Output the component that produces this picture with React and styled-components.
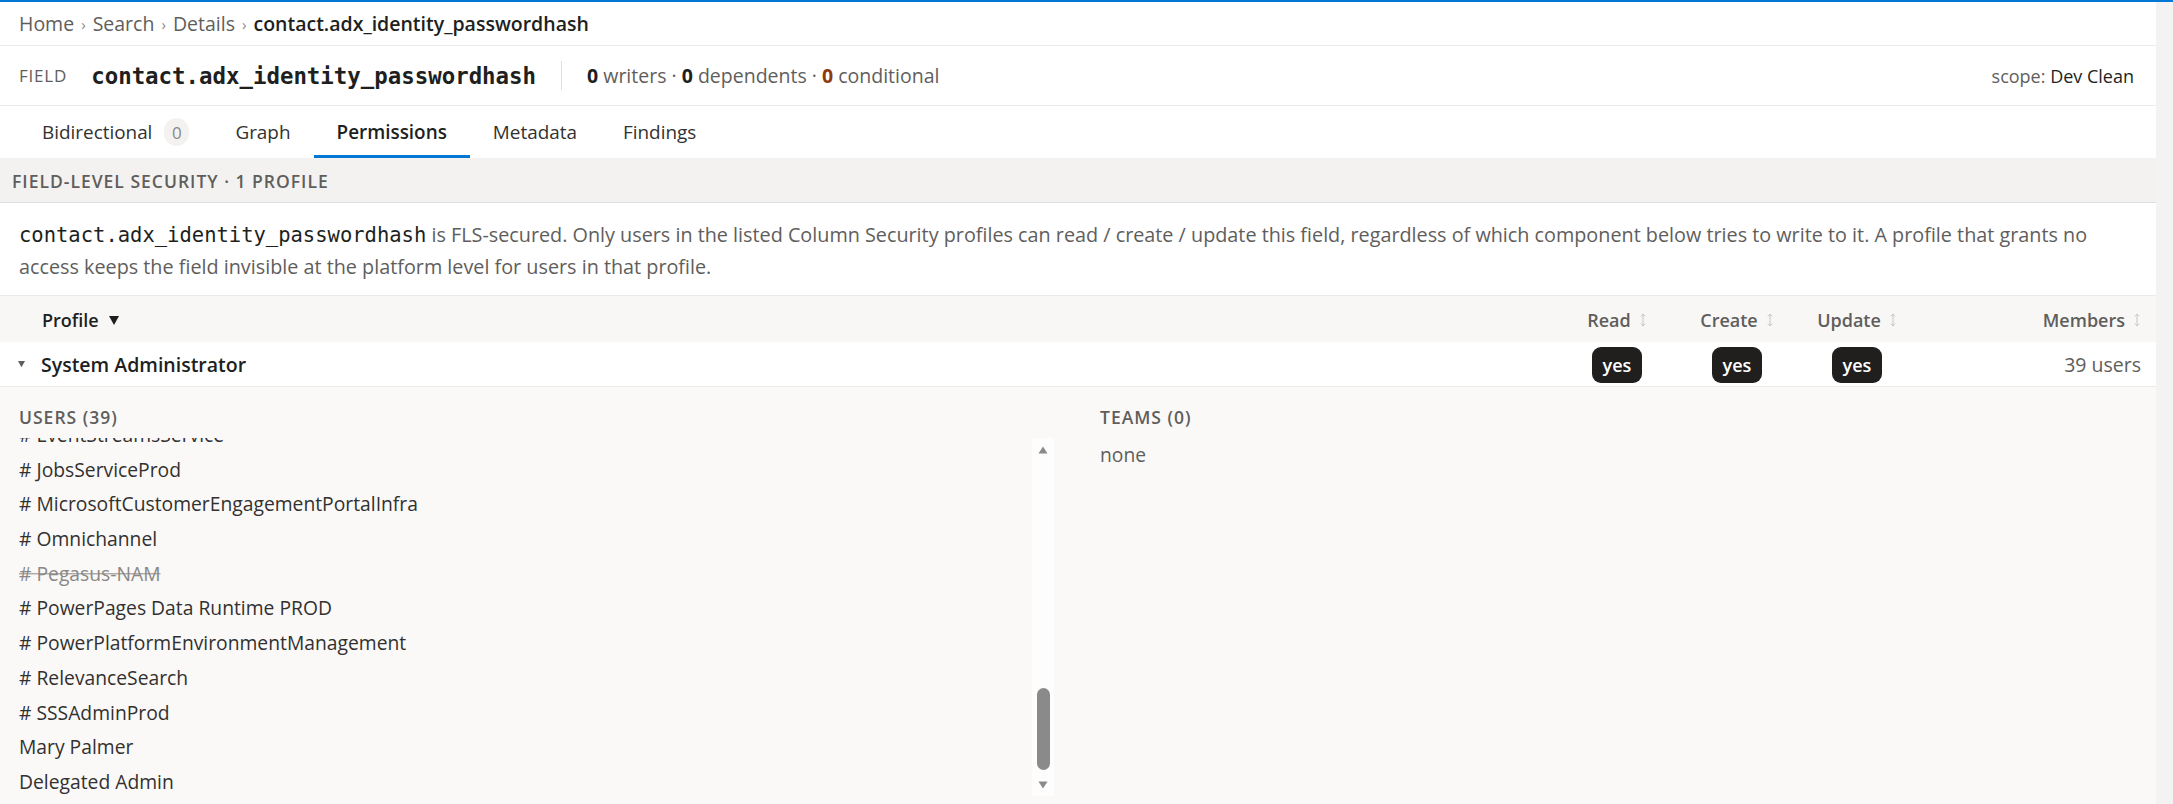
import React from "react";
import styled, { createGlobalStyle } from "styled-components";

const GlobalStyle = createGlobalStyle`
  html, body {
    margin: 0;
    padding: 0;
    background: #ffffff;
  }
  body {
    font-family: "Open Sans", "Noto Sans", sans-serif;
    color: #323130;
    overflow: hidden;
  }
  * {
    box-sizing: border-box;
  }
`;

const MONO = `"DejaVu Sans Mono", "Liberation Mono", monospace`;

const Frame = styled.div`
  display: flex;
  height: 100vh;
  border-top: 2px solid #0078d4;
`;

const Main = styled.div`
  flex: 1;
  min-width: 0;
  display: flex;
  flex-direction: column;
  overflow: hidden;
`;

const PageTrack = styled.div`
  width: 17px;
  flex-shrink: 0;
  background: #f3f3f3;
`;

/* breadcrumb bar */
const Crumbs = styled.nav`
  height: 44px;
  flex-shrink: 0;
  display: flex;
  align-items: center;
  padding: 0 19px;
  border-bottom: 1px solid #edebe9;
  font-size: 19.5px;
  color: #605e5c;
`;

const Sep = styled.span`
  margin: 0 7px;
  font-size: 15px;
  color: #8a8886;
`;

const Current = styled.span`
  color: #201f1e;
  font-weight: 600;
`;

/* field header */
const FieldBar = styled.header`
  height: 60px;
  flex-shrink: 0;
  display: flex;
  align-items: center;
  padding: 0 22px 0 19px;
  border-bottom: 1px solid #edebe9;
`;

const Kind = styled.span`
  font-size: 17px;
  letter-spacing: 0.8px;
  color: #605e5c;
  margin-right: 24px;
`;

const FieldName = styled.span`
  font-family: ${MONO};
  font-size: 22.4px;
  font-weight: bold;
  color: #201f1e;
`;

const VDivider = styled.span`
  width: 1px;
  height: 29px;
  background: #e1dfdd;
  margin: 0 25px 0 25px;
`;

const Stats = styled.span`
  font-size: 19.5px;
  color: #605e5c;
`;

const Num = styled.b`
  font-weight: 700;
  color: ${(p) => (p.$warn ? "#8e3a0e" : "#201f1e")};
`;

const Scope = styled.span`
  margin-left: auto;
  font-size: 18px;
  color: #605e5c;

  span {
    color: #201f1e;
  }
`;

/* tabs */
const TabBar = styled.div`
  height: 52px;
  flex-shrink: 0;
  display: flex;
  padding-left: 19px;
`;

const Tab = styled.div`
  display: flex;
  align-items: center;
  padding: 3px 23px 0;
  font-size: 18.9px;
  color: ${(p) => (p.$active ? "#201f1e" : "#323130")};
  font-weight: ${(p) => (p.$active ? 600 : 400)};
  border-bottom: 3px solid ${(p) => (p.$active ? "#0078d4" : "transparent")};
`;

const TabCount = styled.span`
  margin-left: 12px;
  min-width: 25px;
  height: 28px;
  border-radius: 14px;
  background: #f3f2f1;
  color: #8a8886;
  font-size: 17px;
  font-weight: 400;
  display: flex;
  align-items: center;
  justify-content: center;
`;

/* section */
const SectionHeader = styled.div`
  height: 45px;
  flex-shrink: 0;
  display: flex;
  align-items: center;
  padding: 1px 12px 0;
  background: #f3f2f1;
  border-bottom: 1px solid #e1dfdd;
  font-size: 17.5px;
  font-weight: 600;
  letter-spacing: 1px;
  text-transform: uppercase;
  color: #605e5c;
`;

const Description = styled.p`
  margin: 0;
  flex-shrink: 0;
  padding: 16px 19px 12px;
  font-size: 19.8px;
  line-height: 32px;
  color: #605e5c;
  border-bottom: 1px solid #edebe9;
`;

const Code = styled.code`
  font-family: ${MONO};
  font-size: 20.5px;
  color: #201f1e;
`;

/* permissions table */
const Row = styled.div`
  display: grid;
  grid-template-columns: 1fr 120px 120px 120px 239px;
  align-items: center;
  flex-shrink: 0;
`;

const HeadRow = styled(Row)`
  height: 46px;
  padding-top: 2px;
  background: #f8f7f6;
  font-size: 18px;
  font-weight: 600;
  color: #605e5c;
`;

const ProfileRow = styled(Row)`
  height: 45px;
  padding-top: 1px;
  background: #ffffff;
  border-bottom: 1px solid #edebe9;
`;

const Cell = styled.div`
  display: flex;
  align-items: center;
  justify-content: ${(p) =>
    p.$align === "right" ? "flex-end" : p.$align === "center" ? "center" : "flex-start"};
  padding-right: ${(p) => (p.$align === "right" ? "15px" : "0")};
`;

const ProfileHead = styled(Cell)`
  padding-left: 42px;
  color: #201f1e;
  gap: 10px;
`;

const ProfileName = styled(Cell)`
  padding-left: 18px;
  gap: 16px;
  font-size: 19.5px;
  font-weight: 600;
  color: #201f1e;
`;

const Pill = styled.span`
  width: 50px;
  height: 36px;
  border-radius: 9px;
  background: #201f1e;
  color: #ffffff;
  font-size: 18px;
  font-weight: 600;
  display: flex;
  align-items: center;
  justify-content: center;
`;

const Members = styled.span`
  font-size: 19.5px;
  color: #605e5c;
`;

const SortIcon = () => (
  <svg width="8" height="16" viewBox="0 0 8 16" style={{ marginLeft: 8 }}>
    <path d="M4 2v12M1.8 4.4 4 2l2.2 2.4M1.8 11.6 4 14l2.2-2.4" fill="none" stroke="#c8c6c4" strokeWidth="1" />
  </svg>
);

const DownTriangle = ({ size = 10, color = "#201f1e" }) => (
  <svg width={size} height={size * 0.9} viewBox="0 0 10 9">
    <path d="M0 0h10L5 9z" fill={color} />
  </svg>
);

/* expanded profile details */
const Details = styled.div`
  flex: 1;
  display: grid;
  grid-template-columns: 1fr 1fr;
  column-gap: 44px;
  padding: 19px 19px 0;
  background: #faf9f8;
`;

const Group = styled.div`
  min-width: 0;
`;

const GroupLabel = styled.div`
  font-size: 17.5px;
  font-weight: 600;
  letter-spacing: 1px;
  line-height: 22px;
  color: #605e5c;
  margin-bottom: 10px;
`;

const Scroller = styled.div`
  display: flex;
  height: ${(p) => p.$height}px;
`;

const Viewport = styled.div`
  flex: 1;
  overflow: hidden;
`;

const ItemList = styled.ul`
  margin: 0;
  padding: 0;
  list-style: none;
`;

const Item = styled.li`
  height: ${(p) => p.$h || 34.7}px;
  line-height: ${(p) => p.$h || 34.7}px;
  font-size: 19.3px;
  white-space: nowrap;
  color: ${(p) => (p.$muted ? "#8a8886" : p.$soft ? "#605e5c" : "#323130")};
  text-decoration: ${(p) => (p.$muted ? "line-through" : "none")};
`;

const Rail = styled.div`
  width: 22px;
  margin-right: 2px;
  flex-shrink: 0;
  display: flex;
  flex-direction: column;
  background: #fdfdfd;
`;

const RailButton = styled.div`
  height: 23px;
  display: flex;
  align-items: center;
  justify-content: center;
`;

const RailTrack = styled.div`
  flex: 1;
  position: relative;
`;

const Thumb = styled.div`
  position: absolute;
  left: 5px;
  right: 4px;
  border-radius: 7px;
  background: #8a8a8a;
`;

const Arrow = ({ up }) => (
  <svg width="10" height="8" viewBox="0 0 10 8">
    <path d={up ? "M5 0.5 9.5 7.5H0.5z" : "M0.5 0.5h9L5 7.5z"} fill="#8a8a8a" />
  </svg>
);

const users = [
  "Adele Vance",
  "Alex Wilber",
  "Allan Deyoung",
  "Christie Cline",
  "Diego Siciliani",
  "Grady Archie",
  "Henrietta Mueller",
  "Isaiah Langer",
  "Johanna Lorenz",
  "Joni Sherman",
  "Lee Gu",
  "Lidia Holloway",
  "Lynne Robbins",
  "Megan Bowen",
  "Miriam Graham",
  "Nestor Wilke",
  "Patti Fernandez",
  "Pradeep Gupta",
  "# AIBuilderProd",
  "# AppDeploymentOrchestration",
  "# CCaaS_CRMClient",
  "# ConnectorAuth",
  "# D365 Sales Insights",
  "# DataverseSearch",
  "# DynamicsMKT",
  "# EnvironmentAdmin",
  "# Flow",
  "# Insights App Platform",
  "# EventStreamsService",
  "# JobsServiceProd",
  "# MicrosoftCustomerEngagementPortalInfra",
  "# Omnichannel",
  { name: "# Pegasus-NAM", disabled: true },
  "# PowerPages Data Runtime PROD",
  "# PowerPlatformEnvironmentManagement",
  "# RelevanceSearch",
  "# SSSAdminProd",
  "Mary Palmer",
  "Delegated Admin",
];

const ITEM_H = 34.7;
const VIEW_H = 358;
const BUTTONS_H = 46;

// windowed list: only rows from the current scroll position down are mounted
const UserList = ({ scrollTop }) => {
  const total = users.length * ITEM_H;
  const maxScroll = total - VIEW_H;
  const first = Math.floor(scrollTop / ITEM_H);
  const offset = scrollTop - first * ITEM_H;

  const track = VIEW_H - BUTTONS_H;
  const thumbH = (track * VIEW_H) / total;
  const thumbTop = ((track - thumbH) * scrollTop) / maxScroll - 2;

  return (
    <Scroller $height={VIEW_H}>
      <Viewport>
        <ItemList style={{ transform: `translateY(${-offset}px)` }}>
          {users.slice(first, first + 12).map((u) => {
            const name = typeof u === "string" ? u : u.name;
            return (
              <Item key={name} $h={ITEM_H} $muted={typeof u !== "string" && u.disabled}>
                {name}
              </Item>
            );
          })}
        </ItemList>
      </Viewport>
      <Rail>
        <RailButton>
          <Arrow up />
        </RailButton>
        <RailTrack>
          <Thumb style={{ top: thumbTop, height: thumbH }} />
        </RailTrack>
        <RailButton>
          <Arrow />
        </RailButton>
      </Rail>
    </Scroller>
  );
};

const tabs = [
  { label: "Bidirectional", count: 0 },
  { label: "Graph" },
  { label: "Permissions", active: true },
  { label: "Metadata" },
  { label: "Findings" },
];

const FIELD = "contact.adx_identity_passwordhash";

const App = () => {
  const scrollTop = users.length * ITEM_H - VIEW_H - 4;

  return (
    <>
      <GlobalStyle />
      <Frame>
        <Main>
          <Crumbs>
            Home<Sep>›</Sep>Search<Sep>›</Sep>Details<Sep>›</Sep>
            <Current>{FIELD}</Current>
          </Crumbs>

          <FieldBar>
            <Kind>FIELD</Kind>
            <FieldName>{FIELD}</FieldName>
            <VDivider />
            <Stats>
              <Num>0</Num> writers · <Num>0</Num> dependents · <Num $warn>0</Num> conditional
            </Stats>
            <Scope>
              scope: <span>Dev Clean</span>
            </Scope>
          </FieldBar>

          <TabBar>
            {tabs.map((t) => (
              <Tab key={t.label} $active={t.active}>
                {t.label}
                {t.count !== undefined && <TabCount>{t.count}</TabCount>}
              </Tab>
            ))}
          </TabBar>

          <SectionHeader>Field-level security · 1 profile</SectionHeader>

          <Description>
            <Code>{FIELD}</Code> is FLS-secured. Only users in the listed Column Security profiles can
            read / create / update this field, regardless of which component below tries to write to it.
            A profile that grants no access keeps the field invisible at the platform level for users in
            that profile.
          </Description>

          <HeadRow>
            <ProfileHead>
              Profile <DownTriangle />
            </ProfileHead>
            <Cell $align="center">
              Read <SortIcon />
            </Cell>
            <Cell $align="center">
              Create <SortIcon />
            </Cell>
            <Cell $align="center">
              Update <SortIcon />
            </Cell>
            <Cell $align="right">
              Members <SortIcon />
            </Cell>
          </HeadRow>

          <ProfileRow>
            <ProfileName>
              <DownTriangle size={7} color="#605e5c" />
              System Administrator
            </ProfileName>
            <Cell $align="center">
              <Pill>yes</Pill>
            </Cell>
            <Cell $align="center">
              <Pill>yes</Pill>
            </Cell>
            <Cell $align="center">
              <Pill>yes</Pill>
            </Cell>
            <Cell $align="right">
              <Members>39 users</Members>
            </Cell>
          </ProfileRow>

          <Details>
            <Group>
              <GroupLabel>USERS (39)</GroupLabel>
              <UserList scrollTop={scrollTop} />
            </Group>
            <Group>
              <GroupLabel>TEAMS (0)</GroupLabel>
              <ItemList>
                <Item $soft>none</Item>
              </ItemList>
            </Group>
          </Details>
        </Main>
        <PageTrack />
      </Frame>
    </>
  );
};

export default App;
